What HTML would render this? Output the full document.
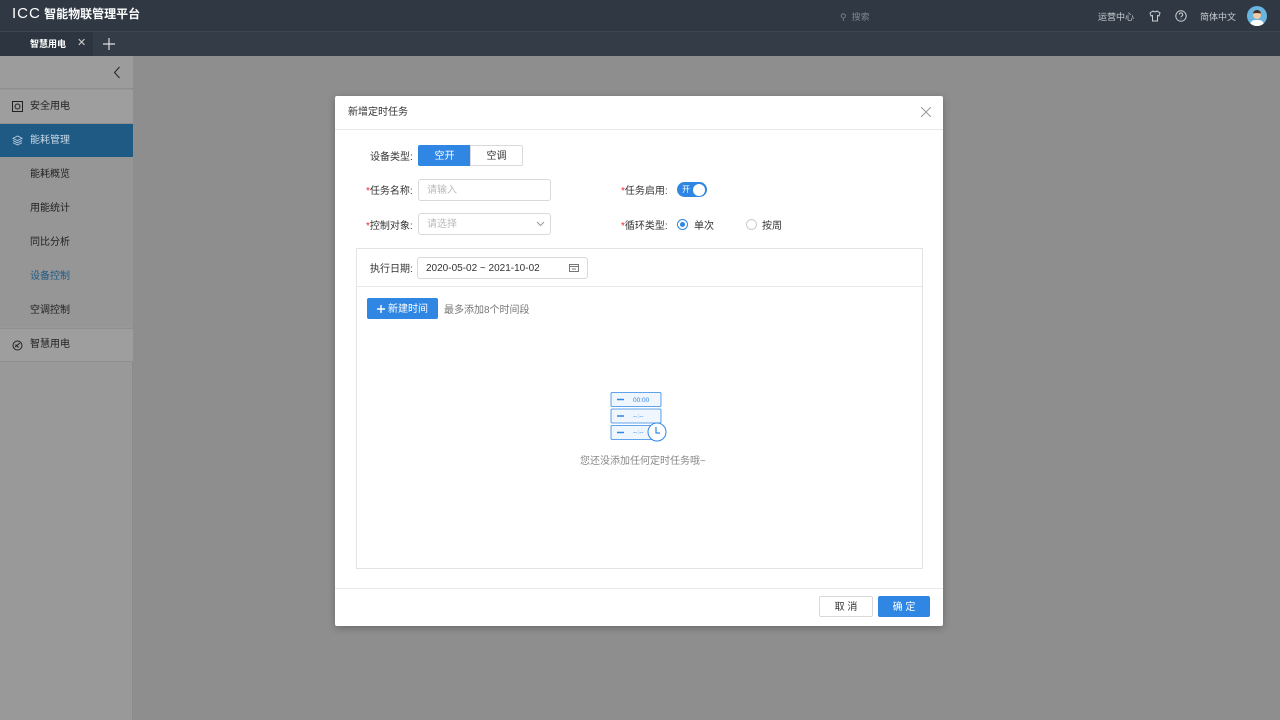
<!DOCTYPE html>
<html><head><meta charset="utf-8"><style>
*{margin:0;padding:0;box-sizing:border-box}
body{width:1280px;height:720px;overflow:hidden;font-family:"Liberation Sans","Noto Sans CJK SC",sans-serif;font-size:10px;line-height:12px;color:#333;background:#8e8e8e;position:relative}
.top{position:absolute;left:0;top:0;width:1280px;height:32px;background:#2f3843;border-bottom:1px solid #3c4651}
.tabs{position:absolute;left:0;top:32px;width:1280px;height:24px;background:#333c47}
.side{position:absolute;left:0;top:56px;width:133px;height:664px;background:#999;border-right:1px solid #8a8a8a}
.abs{position:absolute}
.mi{position:absolute;left:0;width:133px;height:34px;display:flex;align-items:center;color:#222;font-size:10px}
.modal{position:absolute;left:335px;top:96px;width:608px;height:530px;background:#fff;border-radius:2px;box-shadow:0 2px 8px rgba(0,0,0,.25)}
.lbl{position:absolute;font-size:10px;line-height:12px;color:#333;white-space:nowrap}
.req{color:#f5222d}
.inp{position:absolute;border:1px solid #d9d9d9;border-radius:3px;height:22px;display:flex;align-items:center;padding-left:8px;padding-top:2px;color:#bbb;font-size:10px}
.c{display:flex;align-items:center;justify-content:center;padding-top:2px}
</style></head><body>
<div class="top">
 <div class="abs" style="left:12px;top:8px;color:#fff;font-size:12px;font-weight:bold;white-space:nowrap"><span style="font-size:15px;font-weight:normal;letter-spacing:1px">ICC</span> 智能物联管理平台</div>
 <div class="abs" style="left:840px;top:11px;color:#7d8690;font-size:9px">⚲ &nbsp;搜索</div>
 <div class="abs" style="left:1098px;top:11px;color:#c8cdd2;font-size:9px">运营中心</div>
 <svg class="abs" style="left:1149px;top:10px" width="12" height="12" viewBox="0 0 12 12" fill="none" stroke="#c8cdd2"><path d="M4 1L1 3l1 3 1.5-.5V11h5V5.5L10 6l1-3-3-2C7.5 2 4.5 2 4 1z"/></svg>
 <svg class="abs" style="left:1175px;top:10px" width="12" height="12" viewBox="0 0 12 12" fill="none" stroke="#c8cdd2"><circle cx="6" cy="6" r="5.2"/><path d="M4.3 4.6a1.7 1.7 0 1 1 2.3 1.6c-.5.2-.6.5-.6 1.1M6 8.6v.6"/></svg>
 <div class="abs" style="left:1200px;top:11px;color:#c8cdd2;font-size:9px">简体中文</div>
 <div class="abs" style="left:1247px;top:6px;width:20px;height:20px;border-radius:50%;background:#6ab4e0;overflow:hidden"><div class="abs" style="left:6px;top:4px;width:8px;height:9px;border-radius:4px;background:#f1c9a5;border-top:3px solid #4a3020"></div><div class="abs" style="left:3px;top:14px;width:14px;height:8px;background:#fff;border-radius:5px 5px 0 0"></div></div>
</div>
<div class="tabs">
 <div class="abs" style="left:0;top:0;width:93px;height:24px;background:#2d3640"></div>
 <div class="abs" style="left:30px;top:6px;color:#fff;font-size:9px;font-weight:bold">智慧用电</div>
 <div class="abs" style="left:77px;top:5px;color:#ccc;font-size:11px">✕</div>
 <svg class="abs" style="left:103px;top:6px" width="12" height="12" viewBox="0 0 12 12" stroke="#ddd" stroke-width="1.2"><path d="M6 0v12M0 6h12"/></svg>
</div>
<div class="side">
 <div class="abs" style="left:0;top:0;width:133px;height:33px;background:#9c9c9c;border-bottom:1px solid #8f8f8f"></div>
 <svg class="abs" style="left:113px;top:10px" width="8" height="13" viewBox="0 0 8 13" fill="none" stroke="#222"><path d="M6.5 1L1.5 6.5l5 5.5"/></svg>
 <div class="mi" style="top:34px;background:#9e9e9e;border-bottom:1px solid #8f8f8f"><svg class="abs" style="left:12px;top:11px" width="11" height="11" viewBox="0 0 11 11" fill="none" stroke="#222"><rect x=".5" y=".5" width="10" height="10"/><circle cx="5.5" cy="5.5" r="2.5"/></svg><span style="position:absolute;left:30px">安全用电</span></div>
 <div class="mi" style="top:68px;background:#1f5a85;color:#c8d8e6;height:33px"><svg class="abs" style="left:12px;top:11px" width="11" height="11" viewBox="0 0 11 11" fill="none" stroke="#a9bfd2"><path d="M5.5 1L10 3.3 5.5 5.6 1 3.3zM1 5.5l4.5 2.3L10 5.5M1 7.7l4.5 2.3L10 7.7"/></svg><span style="position:absolute;left:30px">能耗管理</span></div>
 <div class="abs" style="left:0;top:101px;width:133px;height:170px;background:#969696"></div>
 <div class="mi" style="top:102px"><span style="position:absolute;left:30px">能耗概览</span></div>
 <div class="mi" style="top:136px"><span style="position:absolute;left:30px">用能统计</span></div>
 <div class="mi" style="top:170px"><span style="position:absolute;left:30px">同比分析</span></div>
 <div class="mi" style="top:204px;color:#1f5a85"><span style="position:absolute;left:30px">设备控制</span></div>
 <div class="mi" style="top:238px"><span style="position:absolute;left:30px">空调控制</span></div>
 <div class="mi" style="top:272px;background:#9e9e9e;border-bottom:1px solid #8f8f8f;border-top:1px solid #8f8f8f"><svg class="abs" style="left:12px;top:11px" width="11" height="11" viewBox="0 0 11 11" fill="none" stroke="#222"><circle cx="5.5" cy="5.5" r="4.5"/><path d="M3 7l5-4M3.5 4.5l3 3"/></svg><span style="position:absolute;left:30px">智慧用电</span></div>
</div>
<div class="modal">
 <div class="lbl" style="left:13px;top:11px">新增定时任务</div>
 <svg class="abs" style="left:586px;top:11px" width="10" height="10" viewBox="0 0 10 10" stroke="#999"><path d="M0 0l10 10M10 0L0 10"/></svg>
 <div class="abs" style="left:0;top:33px;width:608px;height:1px;background:#e8e8e8"></div>
 <div class="lbl" style="left:35px;top:56px">设备类型:</div>
 <div class="abs c" style="left:83px;top:49px;width:53px;height:21px;background:#2f86e3;color:#fff;border-radius:2px 0 0 2px">空开</div>
 <div class="abs c" style="left:135px;top:49px;width:53px;height:21px;border:1px solid #d9d9d9;border-radius:0 2px 2px 0">空调</div>
 <div class="lbl" style="left:31px;top:90px"><span class="req">*</span>任务名称:</div>
 <div class="inp" style="left:83px;top:83px;width:133px">请输入</div>
 <div class="lbl" style="left:286px;top:90px"><span class="req">*</span>任务启用:</div>
 <div class="abs" style="left:342px;top:86px;width:30px;height:15px;background:#2f86e3;border-radius:8px;color:#fff;font-size:8px;line-height:15px;padding-left:5px">开<div class="abs" style="left:16px;top:1.5px;width:12px;height:12px;background:#fff;border-radius:50%"></div></div>
 <div class="lbl" style="left:31px;top:125px"><span class="req">*</span>控制对象:</div>
 <div class="inp" style="left:83px;top:117px;width:133px">请选择<svg class="abs" style="left:117px;top:7px" width="9" height="6" viewBox="0 0 9 6" fill="none" stroke="#999"><path d="M1 1l3.5 3.5L8 1"/></svg></div>
 <div class="lbl" style="left:286px;top:125px"><span class="req">*</span>循环类型:</div>
 <div class="abs" style="left:342px;top:123px;width:11px;height:11px;border:1px solid #2f86e3;border-radius:50%"><div class="abs" style="left:2px;top:2px;width:5px;height:5px;background:#2f86e3;border-radius:50%"></div></div>
 <div class="lbl" style="left:359px;top:125px">单次</div>
 <div class="abs" style="left:411px;top:123px;width:11px;height:11px;border:1px solid #ccc;border-radius:50%"></div>
 <div class="lbl" style="left:427px;top:125px">按周</div>
 <div class="abs" style="left:21px;top:152px;width:567px;height:321px;border:1px solid #e3e3e3"></div>
 <div class="abs" style="left:22px;top:190px;width:565px;height:1px;background:#e8e8e8"></div>
 <div class="lbl" style="left:35px;top:168px">执行日期:</div>
 <div class="inp" style="left:82px;top:161px;width:171px;color:#333">2020-05-02 ~ 2021-10-02<svg class="abs" style="left:151px;top:6px" width="10" height="8" viewBox="0 0 10 8" fill="none" stroke="#777"><rect x=".5" y=".5" width="9" height="7"/><path d="M.5 2.5h9M3 5h4"/></svg></div>
 <div class="abs c" style="left:32px;top:202px;width:71px;height:21px;background:#2f86e3;border-radius:2px;color:#fff"><svg width="8" height="8" viewBox="0 0 8 8" stroke="#fff" stroke-width="1.4" style="margin-right:3px;margin-top:-2px"><path d="M4 0v8M0 4h8"/></svg>新建时间</div>
 <div class="lbl" style="left:109px;top:209px;color:#777">最多添加8个时间段</div>
 <svg class="abs" style="left:275px;top:296px" width="60" height="52" viewBox="0 0 60 52"><g fill="#f0f6fd" stroke="#2f86e3" stroke-width=".8"><rect x="1" y="0.5" width="50" height="14" rx="1"/><rect x="1" y="17" width="50" height="14" rx="1"/><rect x="1" y="33.5" width="50" height="14" rx="1"/></g><g stroke="#2f86e3" stroke-width="1.6"><path d="M7 7.5h7M7 24h7M7 40.5h7"/></g><text x="23" y="10" font-size="6.5" fill="#2f86e3" font-family="Liberation Sans">00:00</text><text x="23" y="26" font-size="6.5" fill="#2f86e3" font-family="Liberation Sans">--:--</text><text x="23" y="42" font-size="6.5" fill="#2f86e3" font-family="Liberation Sans">--:--</text><circle cx="47" cy="40" r="9" fill="#fff" stroke="#2f86e3"/><path d="M46 35v6h4" fill="none" stroke="#2f86e3" stroke-width="1.2"/></svg>
 <div class="lbl" style="left:245px;top:360px;color:#888">您还没添加任何定时任务哦~</div>
 <div class="abs" style="left:0;top:492px;width:608px;height:1px;background:#e8e8e8"></div>
 <div class="abs c" style="left:484px;top:500px;width:54px;height:21px;border:1px solid #d9d9d9;border-radius:2px">取 消</div>
 <div class="abs c" style="left:543px;top:500px;width:52px;height:21px;background:#2f86e3;color:#fff;border-radius:2px">确 定</div>
</div>
</body></html>
